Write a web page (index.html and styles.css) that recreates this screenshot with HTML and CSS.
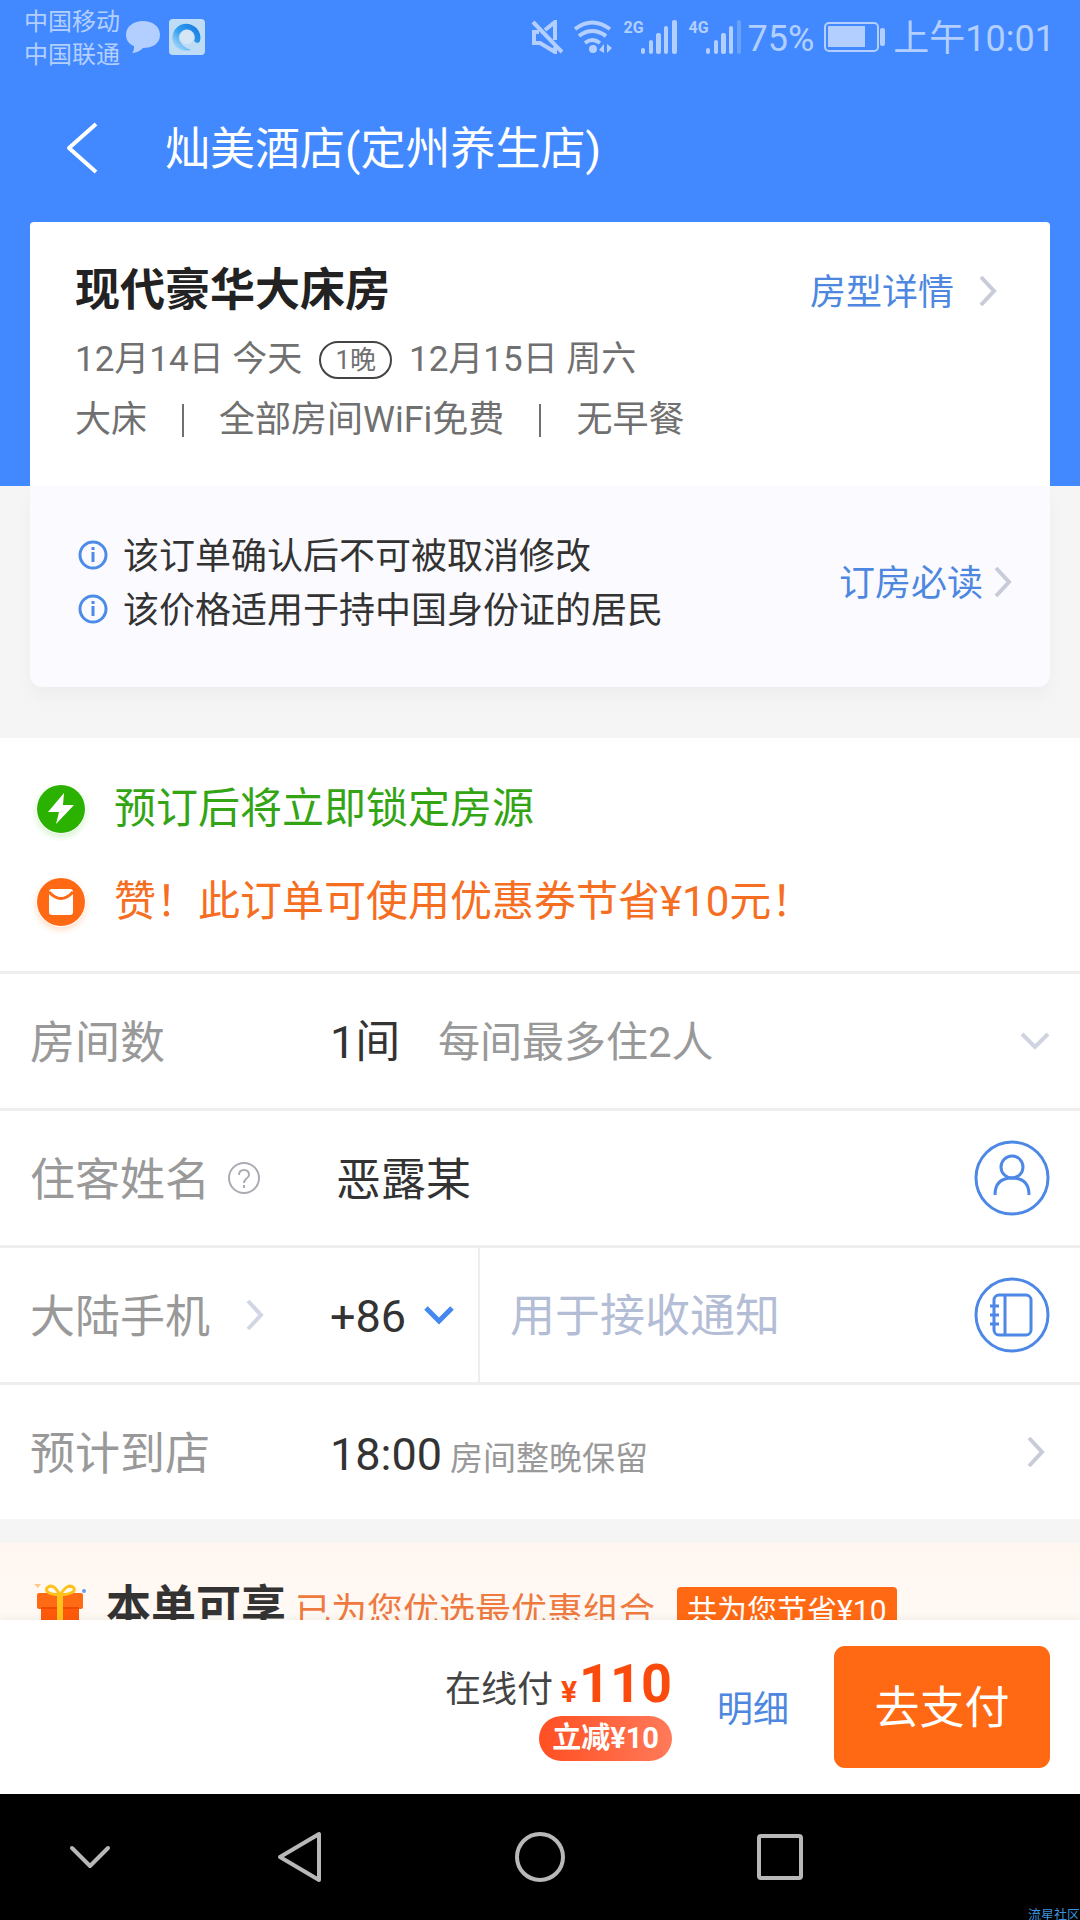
FILE: index.html
```html
<!DOCTYPE html>
<html lang="zh-CN">
<head>
<meta charset="utf-8">
<meta name="viewport" content="width=device-width, initial-scale=1">
<title>灿美酒店(定州养生店)</title>
<link rel="stylesheet" href="styles.css">
</head>
<body>
<svg class="sprite" aria-hidden="true">
  <symbol id="chevron-right" viewBox="0 0 18 32"><path d="M2 2L15 16L2 30" fill="none" stroke="currentColor" stroke-width="4"/></symbol>
  <symbol id="chevron-down" viewBox="0 0 30 20"><path d="M2 3L15 16L28 3" fill="none" stroke="currentColor" stroke-width="4"/></symbol>
  <symbol id="chevron-bold" viewBox="0 0 30 20"><path d="M2 3L15 16L28 3" fill="none" stroke="currentColor" stroke-width="5"/></symbol>
  <symbol id="info" viewBox="0 0 30 30"><circle cx="15" cy="15" r="13" fill="none" stroke="currentColor" stroke-width="3"/><path d="M15 12V22M15 7V10" stroke="currentColor" stroke-width="3"/></symbol>
</svg>

<header class="top">
  <div class="status">
    <div class="carriers"><span>中国移动</span><span>中国联通</span></div>
    <svg class="bubble" viewBox="0 0 34 34" width="34" height="34"><path d="M17 1C26 1 34 6 34 15S26 28 17 28C15 30 11 33 6 33C8 31 8 29 8 26C3 24 0 20 0 15C0 6 8 1 17 1Z" fill="#b3cfff"/></svg>
    <svg class="app" viewBox="0 0 36 36" width="36" height="36">
      <defs><linearGradient id="ring" x1="0" y1="1" x2="1" y2="0"><stop offset="0" stop-color="#c6e6fb"/><stop offset=".5" stop-color="#2f9df0"/><stop offset="1" stop-color="#1272dc"/></linearGradient></defs>
      <rect width="36" height="36" rx="4" fill="#bedcf5"/>
      <path d="M6 27A14 14 0 1 1 31 22Q29 26 25 22A8 8 0 1 0 12 24Q14 28 22 31Q12 33 6 27Z" fill="url(#ring)"/>
      <circle cx="18" cy="18" r="7" fill="#d7e6f5"/>
    </svg>
    <div class="indicators">
      <svg viewBox="0 0 32 34" width="32" height="34" fill="none" stroke="#b3cfff" stroke-width="4"><path d="M2 2L31 32M24 20V2L14 10M8 12H3V23H9L24 32V27"/></svg>
      <svg class="wifi" viewBox="0 0 39 34" width="39" height="34"><path d="M2 9Q19 -4 37 9M6 16Q19 6 33 16M12 23Q19 17 27 23" fill="none" stroke="#b3cfff" stroke-width="4"/><circle cx="20" cy="29" r="4" fill="#b3cfff"/><path d="M26 30L31 24V33M34 33V24L39 28Z" fill="#b3cfff"/></svg>
      <div class="signal"><span>2G</span><svg viewBox="0 0 36 34" width="36" height="34" fill="#b3cfff"><rect x="0" y="28" width="4" height="6" rx="2"/><rect x="8" y="20" width="4" height="14" rx="2"/><rect x="15" y="13" width="5" height="21" rx="2"/><rect x="23" y="6" width="4" height="28" rx="2"/><rect x="31" y="0" width="5" height="34" rx="2"/></svg></div>
      <div class="signal"><span>4G</span><svg viewBox="0 0 36 34" width="36" height="34" fill="#b3cfff"><rect x="0" y="28" width="4" height="6" rx="2"/><rect x="8" y="20" width="4" height="14" rx="2"/><rect x="15" y="13" width="5" height="21" rx="2"/><rect x="23" y="6" width="4" height="28" rx="2"/><rect x="31" y="0" width="4" height="34" rx="2" opacity=".35"/></svg></div>
      <span class="percent">75%</span>
      <svg class="battery" viewBox="0 0 61 30" width="61" height="30"><rect x="1" y="1" width="53" height="28" rx="4" fill="none" stroke="#b3cfff" stroke-width="2"/><rect x="4" y="4" width="37" height="21" fill="#b3cfff"/><rect x="56" y="6" width="5" height="18" rx="2" fill="#b3cfff"/></svg>
      <span class="clock">上午10:01</span>
    </div>
  </div>
  <div class="titlebar">
    <button class="back" type="button" aria-label="返回"><svg viewBox="0 0 32 54" width="32" height="54"><path d="M30 3L3 27L30 51" fill="none" stroke="#fff" stroke-width="4" stroke-linejoin="round"/></svg></button>
    <h1>灿美酒店(定州养生店)</h1>
  </div>
</header>

<main>
  <section class="room">
    <div class="room-card">
      <div class="room-head">
        <h2>现代豪华大床房</h2>
        <a class="more" href="#room"><span>房型详情</span><svg class="chev"><use href="#chevron-right"/></svg></a>
      </div>
      <p class="dates"><span>12月14日 今天</span><span class="nights">1晚</span><span>12月15日 周六</span></p>
      <p class="facts"><span>大床</span><i></i><span>全部房间WiFi免费</span><i></i><span>无早餐</span></p>
    </div>
  </section>
  <section class="notice">
    <div class="notice-card">
      <ul>
        <li><svg class="info"><use href="#info"/></svg><span>该订单确认后不可被取消修改</span></li>
        <li><svg class="info"><use href="#info"/></svg><span>该价格适用于持中国身份证的居民</span></li>
      </ul>
      <a class="more tight" href="#rules"><span>订房必读</span><svg class="chev"><use href="#chevron-right"/></svg></a>
    </div>
  </section>

  <section class="tips">
    <p class="tip green"><svg viewBox="0 0 50 50" width="50" height="50"><circle cx="25" cy="25" r="24" fill="#2bb100"/><path d="M28 9L12 28H23L20 40L38 21H27Z" fill="#fff"/></svg>预订后将立即锁定房源</p>
    <p class="tip orange"><svg viewBox="0 0 50 50" width="50" height="50"><circle cx="25" cy="25" r="24" fill="#ff6913"/><rect x="13" y="12" width="24" height="26" rx="3" fill="#fff"/><path d="M13 15Q25 28 37 15" fill="none" stroke="#ff6913" stroke-width="3"/></svg>赞！此订单可使用优惠券节省¥10元！</p>
  </section>

  <form class="form">
    <div class="row">
      <label for="rooms"><span>房间数</span></label>
      <div class="field">
        <select id="rooms" class="rooms"><option>1间</option></select>
        <span class="hint">每间最多住2人</span>
      </div>
      <svg class="chev-down end"><use href="#chevron-down"/></svg>
    </div>
    <div class="row">
      <label for="guest"><span>住客姓名</span><svg class="help" viewBox="0 0 34 34" width="34" height="34" fill="none" stroke="#aaacb4" stroke-width="2"><circle cx="17" cy="17" r="15"/><path d="M12 14Q12 9 17 9T22 14Q22 16 19 18Q17 20 17 22M17 24V27"/></svg></label>
      <div class="field"><input id="guest" class="guest" type="text" value="恶露某"></div>
      <button class="round" type="button" aria-label="选择住客"><svg viewBox="0 0 76 76" width="76" height="76"><circle cx="38" cy="38" r="36"/><circle cx="38" cy="27" r="11"/><path d="M21 55Q21 38 38 38T55 55"/></svg></button>
    </div>
    <div class="row phone">
      <label for="tel"><span>大陆手机</span><svg class="chev region"><use href="#chevron-right"/></svg></label>
      <div class="field">
        <div class="code"><select class="dial" aria-label="国家区号"><option>+86</option></select><svg class="chev-down blue"><use href="#chevron-bold"/></svg></div>
        <input id="tel" class="tel" type="tel" placeholder="用于接收通知">
      </div>
      <button class="round" type="button" aria-label="通讯录"><svg viewBox="0 0 76 76" width="76" height="76"><circle cx="38" cy="38" r="36"/><rect x="20" y="18" width="37" height="40" rx="5"/><path d="M31 18V58M16 29H25M16 38H25M16 47H25"/></svg></button>
    </div>
    <div class="row">
      <label for="arrive"><span>预计到店</span></label>
      <div class="field baseline">
        <select id="arrive" class="arrive"><option>18:00</option></select>
        <span class="hint small">房间整晚保留</span>
      </div>
      <svg class="chev end-right"><use href="#chevron-right"/></svg>
    </div>
  </form>

  <section class="promo">
    <svg class="gift" viewBox="0 0 52 48" width="52" height="48"><path d="M7 18H45V48H7Z" fill="#ff5a0a"/><rect x="3" y="9" width="46" height="16" rx="2" fill="#ff6a14"/><path d="M7 24H45" stroke="#f04a00" stroke-width="2"/><path d="M26 11Q10 10 13 4Q19 -2 26 11Q34 -2 40 4Q42 10 26 11" fill="none" stroke="#ffc21c" stroke-width="3"/><rect x="23" y="9" width="6" height="39" fill="#ffc21c"/><path d="M0 0L7 0L4 4Z" fill="#ffc78a"/><circle cx="50" cy="7" r="2" fill="#6d9cf0"/></svg>
    <h3>本单可享</h3>
    <span class="best">已为您优选最优惠组合</span>
    <span class="save">共为您节省¥10</span>
  </section>
</main>

<footer class="pay">
  <div class="price">
    <p class="total"><span>在线付</span><b class="yen">¥</b><b class="amount">110</b></p>
    <span class="off">立减¥10</span>
  </div>
  <a class="detail" href="#detail">明细</a>
  <button class="go" type="button">去支付</button>
</footer>

<nav class="keys">
  <button type="button" aria-label="收起"><svg viewBox="0 0 50 52" width="50" height="52"><path d="M7 17L25 35L43 17"/></svg></button>
  <button type="button" aria-label="返回"><svg viewBox="0 0 50 52" width="50" height="52"><path d="M44 3V49L5 26Z"/></svg></button>
  <button type="button" aria-label="主页"><svg viewBox="0 0 50 52" width="50" height="52"><circle cx="25" cy="26" r="23"/></svg></button>
  <button type="button" aria-label="最近任务"><svg viewBox="0 0 50 52" width="50" height="52"><rect x="4" y="5" width="42" height="42" rx="2"/></svg></button>
  <span class="mark">流星社区</span>
</nav>
</body>
</html>
```
FILE: styles.css
```css
* { box-sizing: border-box; }

body {
  margin: 0;
  height: 100vh;
  display: flex;
  flex-direction: column;
  font-family: Roboto, "Noto Sans CJK SC", sans-serif;
  font-size: 36px;
  line-height: 48px;
  color: #333;
  background: #f5f5f5;
}

h1, h2, h3, p, ul { margin: 0; padding: 0; }
ul { list-style: none; }
a { color: #4d87e0; text-decoration: none; }
button, select, input {
  margin: 0;
  padding: 0;
  border: 0;
  background: none;
  font: inherit;
  color: inherit;
  appearance: none;
}
button { display: flex; align-items: center; justify-content: center; }
svg { display: block; flex: none; }
.sprite { position: absolute; width: 0; height: 0; }

.chev { width: 18px; height: 32px; color: #c8ccd8; }
.chev-down { width: 30px; height: 20px; color: #d0d3e0; }
.blue { color: #4488f0; }

/* status bar and title */
.top { background: #4289ff; color: #fff; }
.status {
  display: flex;
  align-items: center;
  height: 74px;
  padding: 0 25px 0 24px;
  color: #b3cfff;
}
.carriers {
  display: flex;
  flex-direction: column;
  padding-top: 3px;
  font-size: 24px;
  line-height: 33px;
}
.bubble { margin-left: 6px; }
.app { margin-left: 9px; }
.indicators {
  display: flex;
  align-items: center;
  gap: 10px;
  margin-left: auto;
}
.signal { display: flex; align-items: flex-start; margin-left: 2px; }
.signal span { width: 17px; font-size: 16px; line-height: 16px; font-weight: 700; }
.percent { padding-top: 3px; margin-left: -4px; }
.clock { padding-top: 3px; margin-left: -2px; }
.titlebar {
  display: flex;
  align-items: center;
  height: 148px;
  padding: 0 66px;
}
.back { width: 99px; height: 54px; justify-content: flex-start; }
.titlebar h1 { padding-top: 3px; font-size: 45px; line-height: 60px; font-weight: 400; }

/* scrolling content */
main {
  flex: 1;
  min-height: 0;
  overflow-y: auto;
  scrollbar-width: none;
}

.room { background: #4289ff; padding: 0 30px; }
.room-card {
  padding: 36px 53px 42px 45px;
  border-radius: 4px 4px 0 0;
  background: #fff;
  color: #707070;
}
.room-head { display: flex; justify-content: space-between; align-items: center; }
.room-head h2 { font-size: 45px; line-height: 66px; color: #222; }
.more { display: flex; align-items: center; gap: 25px; }
.more span { padding-top: 4px; }
.tight { gap: 11px; }
.dates { display: flex; align-items: center; gap: 17px; margin-top: 12px; font-size: 35px; }
.nights {
  padding: 0 14px;
  border: 2px solid #444;
  border-radius: 20px;
  font-size: 26px;
  line-height: 34px;
}
.facts { display: flex; align-items: center; margin-top: 12px; }
.facts i { width: 2px; height: 33px; margin: 0 35px; background: #707070; }

.notice { padding: 0 30px 51px; }
.notice-card {
  display: flex;
  justify-content: space-between;
  align-items: center;
  padding: 42px 38px 51px 48px;
  border-radius: 0 0 12px 12px;
  background: #fbfbff;
  box-shadow: 0 10px 16px rgba(0, 0, 0, .03);
}
.notice-card li { display: flex; align-items: center; gap: 15px; height: 54px; }
.notice-card li span { padding-top: 3px; }
.info { width: 30px; height: 30px; color: #4d8be8; }

.tips { padding: 41px 36px 39px; background: #fff; font-size: 42px; }
.tip { display: flex; align-items: center; gap: 28px; line-height: 60px; }
.tip + .tip { margin-top: 33px; }
.tip svg { border-radius: 50%; }
.green { color: #33a514; }
.green svg { box-shadow: 0 3px 6px #d5f2cc; }
.orange { color: #f66e22; }
.orange svg { box-shadow: 0 3px 6px #ffdcc8; }

/* booking form */
.form { background: #fff; font-size: 45px; line-height: 60px; }
.row {
  display: grid;
  grid-template-columns: 300px 1fr auto;
  align-items: center;
  min-height: 137px;
  padding: 0 30px;
  border-top: 3px solid #eee;
}
.row label { display: flex; align-items: center; color: #999; }
.row label span { padding-top: 6px; }
.help { margin-left: 17px; }
.region { margin-left: 36px; color: #d0d6e4; }
.field { display: flex; align-items: center; min-width: 0; }
.field select, .field input { height: 64px; padding-top: 4px; font-weight: 400; }
.rooms { width: 72px; }
.hint { margin-left: 36px; font-size: 42px; color: #999; padding-top: 4px; }
.field .guest { width: 100%; padding: 0 0 4px 6px; }
.round svg { fill: none; stroke: #4d88e6; stroke-width: 3; }
.end-right { margin-right: 5px; }
.phone { align-items: stretch; }
.phone .field { align-items: stretch; }
.code {
  display: flex;
  align-items: center;
  width: 150px;
  border-right: 2px solid #eee;
}
.code select { width: 94px; }
.field .tel { flex: 1; min-width: 0; height: auto; padding-left: 30px; }
.tel::placeholder { color: #b4bdd6; opacity: 1; }
.baseline { align-items: baseline; padding-top: 5px; }
.arrive { width: 112px; }
.small { margin-left: 8px; font-size: 33px; }

.promo {
  display: flex;
  align-items: center;
  margin-top: 24px;
  padding: 32px 34px;
  background: linear-gradient(#fff6f1, #fffbf7);
}
.promo h3 { margin-left: 20px; font-size: 45px; line-height: 66px; }
.best { margin-left: 9px; padding-top: 8px; color: #ee7a40; }
.save {
  margin: 6px 0 0 22px;
  padding: 0 10px;
  border-radius: 4px;
  background: #ff6913;
  color: #fff;
  font-size: 30px;
}

/* payment bar */
.pay {
  position: relative;
  display: flex;
  align-items: center;
  justify-content: flex-end;
  padding: 26px 30px 26px;
  background: #fff;
  box-shadow: 0 -3px 6px rgba(0, 0, 0, .04);
}
.price { display: flex; flex-direction: column; align-items: flex-end; padding-top: 6px; }
.total { display: flex; align-items: baseline; color: #444; }
.yen { margin-left: 8px; font-size: 30px; color: #fa4a0c; }
.amount { margin-left: 2px; font-size: 54px; color: #fa4a0c; }
.off {
  padding: 0 13px;
  border-radius: 23px;
  background: linear-gradient(90deg, #ff4f22, #ff7a5a);
  color: #fff;
  font-size: 29px;
  line-height: 45px;
  font-weight: 700;
}
.detail { margin: 0 45px; padding-top: 5px; }
.go {
  width: 216px;
  height: 122px;
  padding-top: 4px;
  border-radius: 11px;
  background: #ff6913;
  color: #fff;
  font-size: 45px;
}

/* system keys */
.keys {
  position: relative;
  display: grid;
  grid-template-columns: 180px repeat(3, 240px) 1fr;
  align-items: center;
  height: 126px;
  background: #000;
}
.keys svg { fill: none; stroke: #b8b8b8; stroke-width: 4; stroke-linecap: round; stroke-linejoin: round; }
.mark {
  position: absolute;
  right: 0;
  bottom: -3px;
  font-size: 13px;
  line-height: 16px;
  color: #3d93dc;
}
```
